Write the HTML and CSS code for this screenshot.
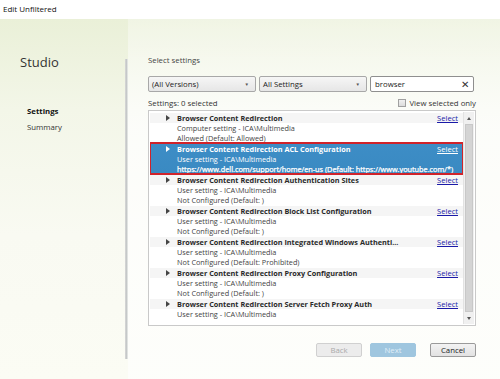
FILE: index.html
```html
<!DOCTYPE html>
<html>
<head>
<meta charset="utf-8">
<link rel="stylesheet" href="styles.css">
</head>
<body>
<div class="window">
  <div class="titlebar">Edit Unfiltered</div>
  <div class="main">
    <nav class="nav">
      <div class="brand">Studio</div>
      <div class="steps">
        <div class="step active">Settings</div>
        <div class="step">Summary</div>
      </div>
    </nav>
    <div class="divider"></div>
    <section class="content">
      <div class="heading">Select settings</div>
      <div class="filters">
        <div class="dropdown dd1"><span>(All Versions)</span><span class="caret">▼</span></div>
        <div class="dropdown dd2"><span>All Settings</span><span class="caret">▼</span></div>
        <div class="search"><span>browser</span><span class="clear">✕</span></div>
      </div>
      <div class="status">
        <span>Settings: 0 selected</span>
        <label class="viewsel"><span class="check"></span>View selected only</label>
      </div>
      <div class="list">
        <div class="rows">
          <div class="row">
            <div class="line title"><span class="tri"></span><b>Browser Content Redirection</b><a class="sel">Select</a></div>
            <div class="line">Computer setting - ICA\Multimedia</div>
            <div class="line">Allowed (Default: Allowed)</div>
          </div>
          <div class="row selected">
            <div class="line title"><span class="tri"></span><b>Browser Content Redirection ACL Configuration</b><a class="sel">Select</a></div>
            <div class="line">User setting - ICA\Multimedia</div>
            <div class="line url">https://www.dell.com/support/home/en-us (Default: https://www.youtube.com/*)</div>
          </div>
          <div class="row">
            <div class="line title"><span class="tri"></span><b>Browser Content Redirection Authentication Sites</b><a class="sel">Select</a></div>
            <div class="line">User setting - ICA\Multimedia</div>
            <div class="line">Not Configured (Default: )</div>
          </div>
          <div class="row">
            <div class="line title"><span class="tri"></span><b>Browser Content Redirection Block List Configuration</b><a class="sel">Select</a></div>
            <div class="line">User setting - ICA\Multimedia</div>
            <div class="line">Not Configured (Default: )</div>
          </div>
          <div class="row">
            <div class="line title"><span class="tri"></span><b>Browser Content Redirection Integrated Windows Authenti...</b><a class="sel">Select</a></div>
            <div class="line">User setting - ICA\Multimedia</div>
            <div class="line">Not Configured (Default: Prohibited)</div>
          </div>
          <div class="row">
            <div class="line title"><span class="tri"></span><b>Browser Content Redirection Proxy Configuration</b><a class="sel">Select</a></div>
            <div class="line">User setting - ICA\Multimedia</div>
            <div class="line">Not Configured (Default: )</div>
          </div>
          <div class="row">
            <div class="line title"><span class="tri"></span><b>Browser Content Redirection Server Fetch Proxy Auth</b><a class="sel">Select</a></div>
            <div class="line">User setting - ICA\Multimedia</div>
          </div>
        </div>
        <div class="scrollbar">
          <div class="arrow up"></div>
          <div class="track"><div class="thumb"></div></div>
          <div class="arrow down"></div>
        </div>
      </div>
      <div class="buttons">
        <div class="btn disabled">Back</div>
        <div class="btn primary">Next</div>
        <div class="btn cancel">Cancel</div>
      </div>
    </section>
  </div>
</div>
</body>
</html>
```
FILE: styles.css
```css
* { box-sizing: border-box; }
html, body { margin: 0; padding: 0; }
body {
  width: 500px;
  height: 379px;
  overflow: hidden;
  font-family: "Open Sans", "Noto Sans", sans-serif;
  font-size: 7.8px;
  color: #333;
}
.window {
  width: 500px;
  height: 379px;
  display: flex;
  flex-direction: column;
  background: #fff;
}
.titlebar {
  height: 19px;
  padding: 3px 0 0 3px;
  font-size: 8px;
  color: #111;
  background: #fff;
}
.main {
  flex: 1;
  display: flex;
  background: linear-gradient(180deg, #eaf0d8 0%, #f3f6e8 25%, #f9faf2 60%, #fbfcf4 100%);
}
.nav {
  width: 125px;
  flex-shrink: 0;
  padding: 35px 0 0 20px;
}
.brand {
  font-size: 13px;
  color: #333;
  line-height: 16px;
}
.steps { padding: 33px 0 0 7px; }
.step { line-height: 16px; font-size: 7.8px; color: #333; }
.step.active { font-weight: bold; color: #111; }
.divider {
  width: 3px;
  flex-shrink: 0;
  margin: 40px 0 20px 0;
  background: linear-gradient(90deg, #d8d8d8, #c5c8c8 50%, #eef0ee);
}
.content {
  flex: 1;
  min-width: 0;
  padding: 36px 24px 0 20px;
  display: flex;
  flex-direction: column;
  background: linear-gradient(180deg, rgba(255,255,255,0.3), rgba(255,255,255,0.75) 30%, rgba(255,255,255,0.6));
}
.heading { line-height: 10px; color: #444; }
.filters {
  margin-top: 11px;
  display: flex;
  gap: 3px;
  height: 16px;
}
.dropdown {
  width: 108px;
  border: 1px solid #a8a8a8;
  border-radius: 2px;
  background: linear-gradient(180deg, #f6f6f6, #e6e6e6);
  display: flex;
  align-items: center;
  justify-content: space-between;
  padding: 0 6px 0 3px;
  color: #222;
}
.caret { font-size: 4.5px; color: #555; }
.search {
  flex: 1;
  border: 1px solid #8f8f8f;
  border-radius: 2px;
  background: #fff;
  display: flex;
  align-items: center;
  justify-content: space-between;
  padding: 0 4px 0 4px;
  margin-right: 2px;
  color: #222;
}
.clear { font-size: 10px; color: #333; }
.status {
  margin-top: 3px;
  height: 15px;
  display: flex;
  justify-content: space-between;
  align-items: center;
  color: #333;
}
.viewsel { display: flex; align-items: center; gap: 3px; color: #333; }
.check {
  width: 8px; height: 8px;
  border: 1px solid #a0a0a0;
  background: linear-gradient(180deg, #f0f0f0, #dcdcdc);
}
.list {
  height: 216px;
  border: 1px solid #c9c9c9;
  background: #fff;
  display: flex;
  padding: 1px;
  font-size: 7.3px;
}
.rows { flex: 1; min-width: 0; overflow: hidden; }
.row {
  height: 31px;
  padding: 1px 5px 0 27px;
}
.line {
  height: 10px;
  line-height: 10px;
  white-space: nowrap;
  color: #444;
}
.line.title {
  display: flex;
  align-items: center;
  background: #f5f5f5;
  margin-left: -27px;
  padding-left: 27px;
  margin-right: -5px;
  padding-right: 5px;
  position: relative;
}
.line.title b { flex: 1; color: #2a2a2a; }
.tri {
  position: absolute;
  left: 16px;
  top: 2px;
  width: 0;
  height: 0;
  border-top: 3px solid transparent;
  border-bottom: 3px solid transparent;
  border-left: 4px solid #444;
}
.sel { color: #1a1aa8; text-decoration: underline; font-size: 7.6px; }
.row.selected {
  background: linear-gradient(180deg, #3d8dc6, #3a8ac2);
  outline: 2px solid #d0232a;
  outline-offset: -1px;
}
.row.selected .line, .row.selected b, .row.selected .sel { color: #fff; }
.row.selected .tri { border-left-color: #fff; }
.row.selected .line.title { background: transparent; }
.line.url { -webkit-text-stroke: 0.25px #fff; }
.scrollbar {
  width: 11px;
  display: flex;
  flex-direction: column;
  background: #f0f0f0;
  border-left: 1px solid #e2e2e2;
}
.arrow { height: 12px; position: relative; }
.arrow::after {
  content: "";
  position: absolute;
  left: 3px;
  top: 5px;
  border-left: 2px solid transparent;
  border-right: 2px solid transparent;
}
.arrow.up::after { border-bottom: 3px solid #555; }
.arrow.down::after { border-top: 3px solid #555; }
.track { flex: 1; padding: 0 1px; }
.thumb {
  height: 100%;
  background: #d4d4d4;
  border: 1px solid #c8c8c8;
}
.buttons {
  margin-top: 17px;
  display: flex;
  justify-content: flex-end;
  gap: 8px;
}
.btn {
  width: 46px;
  height: 14px;
  border: 1px solid #9a9a9a;
  border-radius: 2px;
  display: flex;
  align-items: center;
  justify-content: center;
  background: linear-gradient(180deg, #f3f3f3, #e2e2e2);
  color: #222;
}
.btn.disabled { color: #aaa; border-color: #d0d0d0; background: #ececec; }
.btn.primary { color: #e0eef8; background: #9fc6df; border-color: #9fc6df; }
.btn.cancel { margin-left: 6px; }
```
